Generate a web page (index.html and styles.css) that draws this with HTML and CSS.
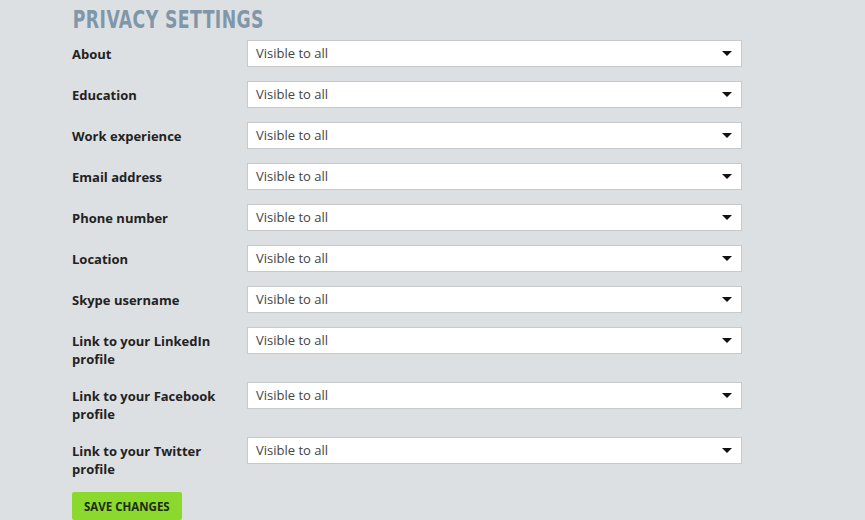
FILE: index.html
```html
<!DOCTYPE html>
<html lang="en">
<head>
  <meta charset="UTF-8" />
  <title>Privacy settings</title>
  <link rel="stylesheet" href="styles.css">
</head>
<body>
  <div class="page">
    <h2 class="title">PRIVACY SETTINGS</h2>

    <form class="privacy-form">
      <div class="row">
        <label class="row-label">About</label>
        <div class="select">Visible to all</div>
      </div>
      <div class="row">
        <label class="row-label">Education</label>
        <div class="select">Visible to all</div>
      </div>
      <div class="row">
        <label class="row-label">Work experience</label>
        <div class="select">Visible to all</div>
      </div>
      <div class="row">
        <label class="row-label">Email address</label>
        <div class="select">Visible to all</div>
      </div>
      <div class="row">
        <label class="row-label">Phone number</label>
        <div class="select">Visible to all</div>
      </div>
      <div class="row">
        <label class="row-label">Location</label>
        <div class="select">Visible to all</div>
      </div>
      <div class="row">
        <label class="row-label">Skype username</label>
        <div class="select">Visible to all</div>
      </div>
      <div class="row">
        <label class="row-label">Link to your LinkedIn profile</label>
        <div class="select">Visible to all</div>
      </div>
      <div class="row">
        <label class="row-label">Link to your Facebook profile</label>
        <div class="select">Visible to all</div>
      </div>
      <div class="row">
        <label class="row-label">Link to your Twitter profile</label>
        <div class="select">Visible to all</div>
      </div>

      <button type="button" class="btn-save">SAVE CHANGES</button>
    </form>
  </div>
</body>
</html>
```

FILE: styles.css
```css
* {
  margin: 0;
  padding: 0;
  box-sizing: border-box;
}

body {
  background: #dde0e3;
  font-family: "Open Sans", Arial, sans-serif;
  color: #222;
}

.page {
  padding: 7px 0 0 72px;
  width: 742px;
}

/* Заголовок */
.title {
  display: block;
  width: 240px;
  font-family: "DejaVu Sans Condensed", "DejaVu Sans", sans-serif;
  font-weight: bold;
  font-size: 24px;
  line-height: 26px;
  color: #7f97a8;
  letter-spacing: 0.5px;
  padding-left: 1px;
  margin-bottom: 7px;
  white-space: nowrap;
  transform: scaleX(0.8); /* шрифт в макете уже */
  transform-origin: left center;
}

/* Строки формы */
.row {
  display: flex;
  align-items: flex-start;
  margin-bottom: 14px;
}

.row-label {
  width: 175px;
  padding: 5px 16px 0 0;
  font-size: 13px;
  font-weight: bold;
  line-height: 18px;
  color: #222;
}

.select {
  position: relative;
  flex: 1;
  height: 27px;
  background: #fff;
  border: 1px solid #c6cacd;
  padding: 0 0 0 8px;
  font-size: 13px;
  line-height: 25px;
  color: #444;
}

/* Стрелка выпадающего списка */
.select::after {
  content: "";
  position: absolute;
  right: 9px;
  top: 10px;
  border-left: 5px solid transparent;
  border-right: 5px solid transparent;
  border-top: 5px solid #111;
}

.btn-save {
  display: block;
  background: #8cd92e;
  border: none;
  border-radius: 2px;
  padding: 0 12px;
  height: 28px;
  font-family: "Open Sans", Arial, sans-serif;
  font-weight: bold;
  font-size: 11.5px;
  color: #1e2a14;
  cursor: pointer;
}
```
